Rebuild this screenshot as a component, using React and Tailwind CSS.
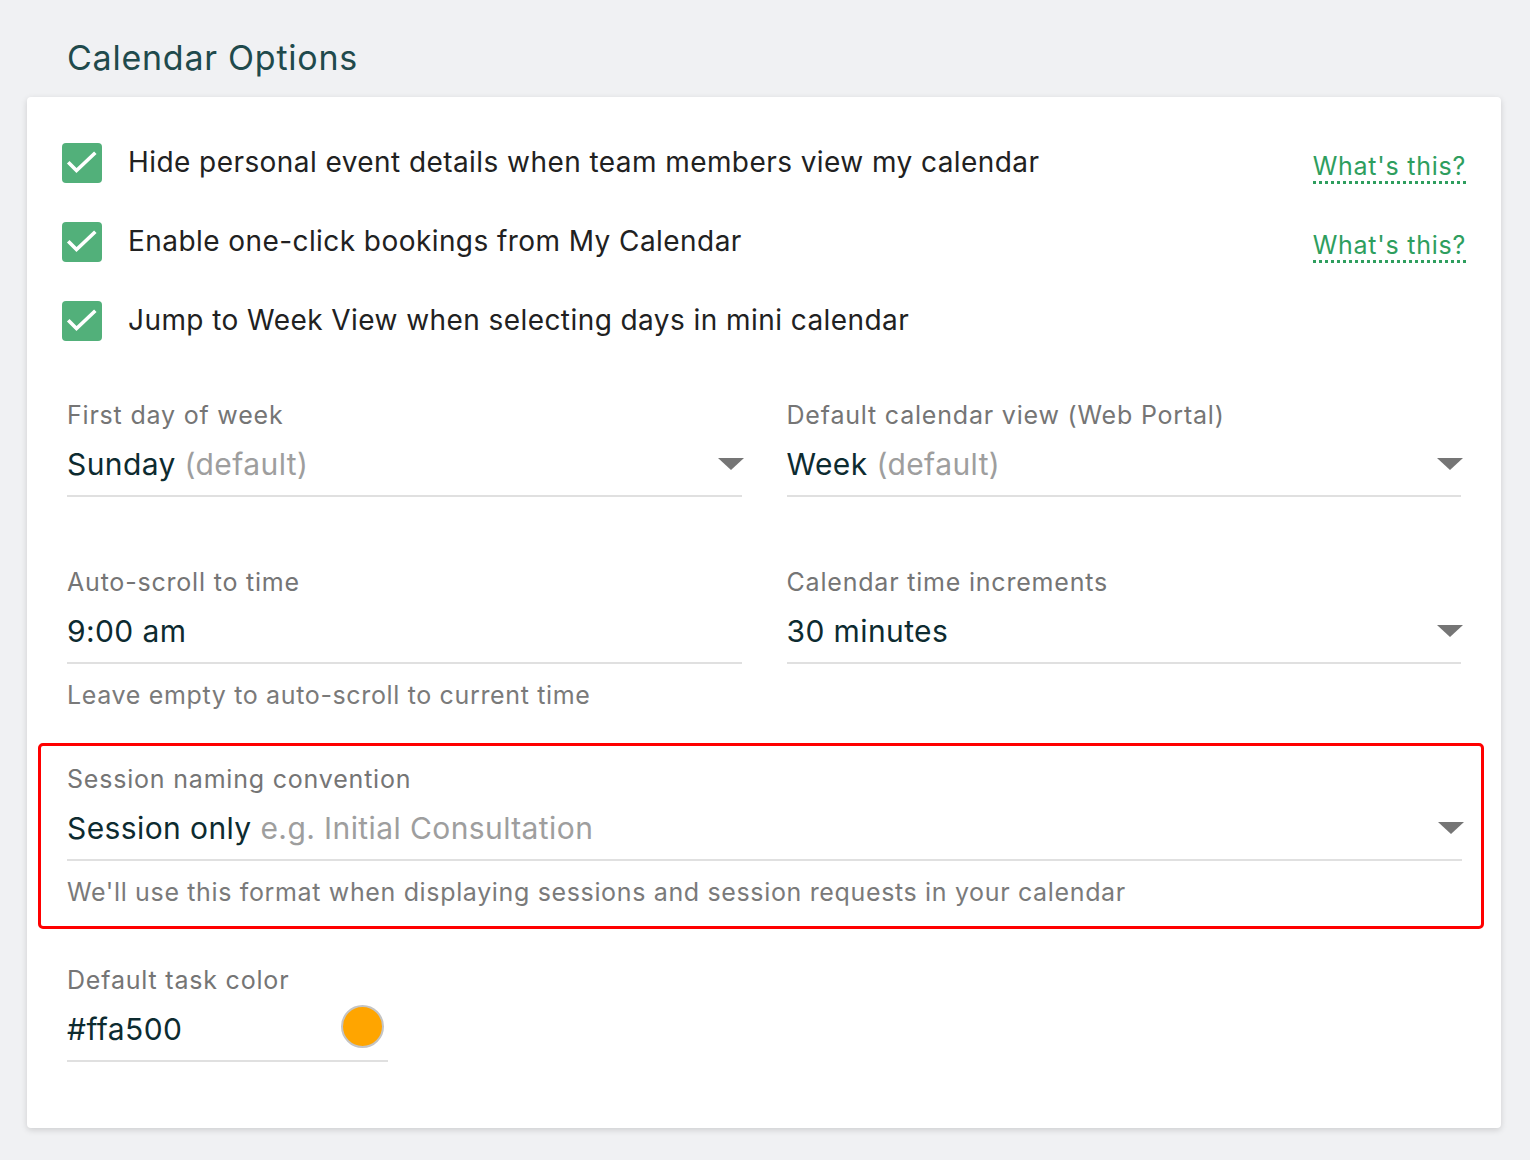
import React from "react";

function Check() {
  return (
    <div className="w-[40px] h-[40px] rounded-[4px] bg-[#52b07a] flex items-center justify-center shrink-0">
      <svg width="40" height="40" viewBox="0 0 40 40" fill="none">
        <path d="M7.5 20.5l7 7L32 11" stroke="#fff" strokeWidth="3.6" strokeLinecap="square" />
      </svg>
    </div>
  );
}

function Caret() {
  return (
    <svg width="26" height="12" viewBox="0 0 26 12" className="shrink-0 mr-[-2px]">
      <path d="M0 0h26L13 12z" fill="#757575" />
    </svg>
  );
}

function CheckRow({ label, help }) {
  return (
    <div className="flex items-center h-[40px]">
      <Check />
      <span className="ml-[26px] mb-[3px] text-[28px] tracking-[0.43px] text-[#212121] leading-[40px] flex-1">{label}</span>
      {help && (
        <a className="mt-[8px] text-[25px] tracking-[0.75px] leading-[30px] text-[#2e9e5e] border-b-[3px] border-dotted border-[#2e9e5e]">
          What's this?
        </a>
      )}
    </div>
  );
}

function Field({ label, value, hint, caret, helper, className = "" }) {
  return (
    <div className={className}>
      <div className="text-[25px] tracking-[0.8px] leading-[36px] text-[#757575]">{label}</div>
      <div className="h-[64px] flex items-center border-b-2 border-[#e0e0e0]">
        <div className="flex-1 text-[30px] tracking-[0.4px] text-[#0d2b30]">
          {value}
          {hint && <span className="text-[#9e9e9e]"> {hint}</span>}
        </div>
        {caret && <Caret />}
      </div>
      {helper && (
        <div className="mt-[15px] text-[25px] tracking-[0.65px] leading-[32px] text-[#7a7a7a]">{helper}</div>
      )}
    </div>
  );
}

export default function App() {
  return (
    <div className="min-h-[1160px] bg-[#f0f1f3] font-['Inter','Noto_Sans',sans-serif] pt-[38px] px-[27px] pb-[32px]">
      <h1 className="pl-[40px] text-[34px] tracking-[0.75px] leading-[40px] text-[#1f4a4c] mb-[19px]">Calendar Options</h1>
      <div className="w-[1474px] bg-white rounded-[4px] shadow-[0_2px_6px_rgba(0,0,0,0.15)] px-[35px] pt-[46px] pb-[66px]">
        <div className="flex flex-col gap-[39px]">
          <CheckRow label="Hide personal event details when team members view my calendar" help />
          <CheckRow label="Enable one-click bookings from My Calendar" help />
          <CheckRow label="Jump to Week View when selecting days in mini calendar" />
        </div>

        <div className="mx-[5px] mt-[56px] grid grid-cols-2 gap-x-[45px]">
          <Field label="First day of week" value="Sunday" hint="(default)" caret />
          <Field label="Default calendar view (Web Portal)" value="Week" hint="(default)" caret />
        </div>

        <div className="mx-[5px] mt-[67px] grid grid-cols-2 gap-x-[45px]">
          <Field label="Auto-scroll to time" value="9:00 am" helper="Leave empty to auto-scroll to current time" />
          <Field label="Calendar time increments" value="30 minutes" caret />
        </div>

        <div className="ml-[-24px] mr-[-18px] mt-[32px] border-[3px] border-[#ff0000] rounded-[5px] pl-[26px] pr-[19px] pt-[15px] pb-[18px]">
          <Field
            label="Session naming convention"
            value="Session only"
            hint="e.g. Initial Consultation"
            caret
            helper="We'll use this format when displaying sessions and session requests in your calendar"
          />
        </div>

        <div className="mx-[5px] mt-[33px] w-[321px]">
          <div className="text-[25px] tracking-[0.8px] leading-[36px] text-[#757575]">Default task color</div>
          <div className="h-[64px] flex items-center border-b-2 border-[#e0e0e0]">
            <div className="flex-1 text-[30px] tracking-[0.4px] text-[#0d2b30]">#ffa500</div>
            <div className="w-[43px] h-[43px] rounded-full bg-[#ffa500] border-2 border-[#c4c4c4] mr-[4px] mb-[5px]" />
          </div>
        </div>
      </div>
    </div>
  );
}
